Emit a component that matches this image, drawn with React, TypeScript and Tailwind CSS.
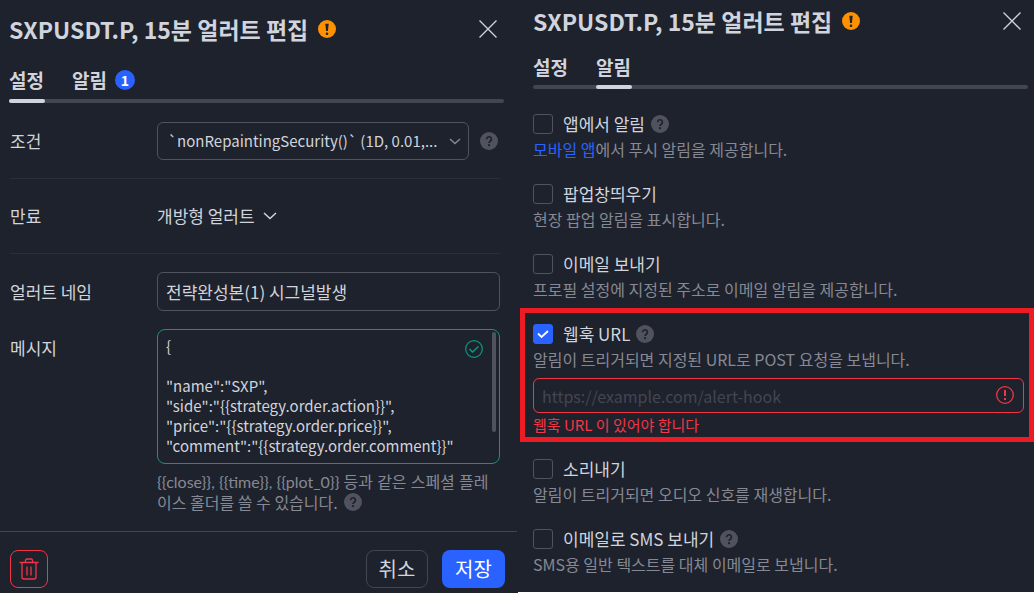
import { useState } from 'react'
import type { ReactNode } from 'react'
import clsx from 'clsx'

const MESSAGE = `{

"name":"SXP",
"side":"{{strategy.order.action}}",
"price":"{{strategy.order.price}}",
"comment":"{{strategy.order.comment}}"`

function HelpIcon() {
  return (
    <svg width="18" height="18" viewBox="0 0 18 18" className="shrink-0" aria-hidden="true">
      <circle cx="9" cy="9" r="9" fill="#50535e" />
      <path d="M6.6 7.2a2.4 2.4 0 1 1 3.7 2c-.9.6-1.3 1-1.3 1.8" fill="none" stroke="#1e222d" strokeWidth="1.7" />
      <circle cx="9" cy="13.2" r="1.1" fill="#1e222d" />
    </svg>
  )
}

function WarningIcon() {
  return (
    <svg width="18" height="18" viewBox="0 0 18 18" className="shrink-0" aria-hidden="true">
      <circle cx="9" cy="9" r="9" fill="#ff9100" />
      <path d="M7.3 3.8h3.4L9.9 11H8.1z" fill="#1e222d" />
      <circle cx="9" cy="13.7" r="1.3" fill="#1e222d" />
    </svg>
  )
}

function CloseIcon() {
  return (
    <svg width="18" height="18" viewBox="0 0 18 18" fill="none" stroke="#d1d4dc" strokeWidth="1.3" aria-hidden="true">
      <path d="M.5.5l17 17M17.5.5l-17 17" />
    </svg>
  )
}

function TrashIcon() {
  return (
    <svg width="20" height="22" viewBox="0 0 20 22" fill="none" stroke="#f23645" strokeWidth="1.3" aria-hidden="true">
      <path d="M.5 4.5h19M6.5 4V2.5A1.5 1.5 0 0 1 8 1h4a1.5 1.5 0 0 1 1.5 1.5V4M3 4.5V19a2 2 0 0 0 2 2h10a2 2 0 0 0 2-2V4.5M8 8.5v9M12 8.5v9" />
    </svg>
  )
}

interface HeaderProps {
  active: number
  badge?: number
  titleClass: string
  tabsClass: string
}

function Header({ active, badge, titleClass, tabsClass }: HeaderProps) {
  const [tab, setTab] = useState(active)

  return (
    <header>
      <div className={clsx('flex items-center justify-between pr-[7px]', titleClass)}>
        <h1 className="flex items-center gap-2.5 text-[23px] leading-9 font-bold">
          SXPUSDT.P, 15분 얼러트 편집
          <WarningIcon />
        </h1>
        <button type="button" aria-label="닫기">
          <CloseIcon />
        </button>
      </div>
      <nav className={clsx('flex gap-7', tabsClass)}>
        {['설정', '알림'].map((name, i) => (
          <button
            key={name}
            type="button"
            onClick={() => setTab(i)}
            className="relative flex items-center gap-2 text-[19px] font-bold"
          >
            {name}
            {i === 1 && badge && (
              <span className="flex size-5 items-center justify-center rounded-full bg-[#2962ff] text-sm text-white">
                {badge}
              </span>
            )}
            {tab === i && <span className="absolute top-full left-0 h-1 w-9 rounded-sm bg-[#d1d4dc]" />}
          </button>
        ))}
      </nav>
      <div className="h-1 rounded-sm bg-[#434651]" />
    </header>
  )
}

interface OptionProps {
  id: string
  label: string
  help?: boolean
  checked?: boolean
  children: ReactNode
}

function Option({ id, label, help, checked, children }: OptionProps) {
  return (
    <div>
      <div className="flex h-6 items-center">
        <span className="relative mr-2.5 flex">
          <input
            id={id}
            type="checkbox"
            defaultChecked={checked}
            className="peer size-5 appearance-none rounded-[3px] border border-[#50535e] checked:border-[#2962ff] checked:bg-[#2962ff]"
          />
          <svg
            viewBox="0 0 20 20"
            className="pointer-events-none absolute inset-0 hidden size-5 peer-checked:block"
            fill="none"
            stroke="#fff"
            strokeWidth="1.8"
            aria-hidden="true"
          >
            <path d="M5 9.5l3.5 3.5L15 7" />
          </svg>
        </span>
        <label htmlFor={id} className="mr-1.5 text-[17px] leading-6">{label}</label>
        {help && <HelpIcon />}
      </div>
      <p className="py-px text-base leading-6 text-[#868993]">{children}</p>
    </div>
  )
}

function SettingsPanel() {
  return (
    <section className="flex flex-col">
      <div className="pr-[13px] pl-[9px]">
        <Header active={0} badge={1} titleClass="pt-[11px]" tabsClass="mt-[14px] h-[38px]" />
      </div>

      <div className="pr-[17px] pl-2.5">
        <div className="flex items-center border-b border-[#2a2e39] pt-[19px] pb-[18px]">
          <label htmlFor="condition" className="w-[147px] shrink-0 text-[17px]">조건</label>
          <div className="relative min-w-0 grow">
            <select
              id="condition"
              className="h-[38px] w-full appearance-none rounded-md border border-[#50535e] bg-transparent pr-6 pl-2.5 text-[15px]"
            >
              <option>`nonRepaintingSecurity()` (1D, 0.01,...</option>
            </select>
            <svg
              viewBox="0 0 12 7"
              className="pointer-events-none absolute top-4 right-2 w-3"
              fill="none"
              stroke="#868993"
              strokeWidth="1.5"
              aria-hidden="true"
            >
              <path d="M1 1l5 4.5L11 1" />
            </svg>
          </div>
          <span className="ml-[11px] pr-0.5">
            <HelpIcon />
          </span>
        </div>

        <div className="flex h-[75px] items-center border-b border-[#2a2e39]">
          <span className="w-[147px] shrink-0 text-[17px]">만료</span>
          <button type="button" className="flex items-center gap-2 text-[17px]">
            개방형 얼러트
            <svg width="14" height="8" viewBox="0 0 14 8" fill="none" stroke="#d1d4dc" strokeWidth="1.5" aria-hidden="true">
              <path d="M1 1l6 5.5L13 1" />
            </svg>
          </button>
        </div>

        <div className="mt-[18px] flex items-center">
          <label htmlFor="name" className="w-[147px] shrink-0 text-[17px]">얼러트 네임</label>
          <input
            id="name"
            defaultValue="전략완성본(1) 시그널발생"
            className="h-[39px] min-w-0 grow rounded-md border border-[#50535e] bg-transparent px-2 text-[17px]"
          />
        </div>

        <div className="mt-[18px] flex">
          <label htmlFor="message" className="w-[147px] shrink-0 pt-1.5 text-[17px]">메시지</label>
          <div className="min-w-0 grow">
            <div className="relative">
              <textarea
                id="message"
                defaultValue={MESSAGE}
                className="block h-[135px] w-full resize-none overflow-hidden rounded-lg border border-[#089981] bg-transparent px-2 py-1.5 text-[15px] leading-5"
              />
              <svg
                viewBox="0 0 18 18"
                className="absolute top-[11px] right-[17px] size-[18px]"
                fill="none"
                stroke="#089981"
                aria-hidden="true"
              >
                <circle cx="9" cy="9" r="8.3" strokeWidth="1.2" />
                <path d="M4.5 9l3 3 6-5.5" strokeWidth="1.5" />
              </svg>
              <span className="absolute top-[3px] right-1 h-[100px] w-1 rounded-sm bg-[#50535e]" />
            </div>
            <p className="mt-2 font-['Lato','Noto_Sans_CJK_KR',sans-serif] text-base leading-5 break-all text-[#868993]">
              {'{{close}}, {{time}}, {{plot_0}} 등과 같은 스페셜 플레'}
              <span className="flex items-center gap-1.5 font-['Noto_Sans_CJK_KR',sans-serif]">
                이스 홀더를 쓸 수 있습니다.
                <HelpIcon />
              </span>
            </p>
          </div>
        </div>
      </div>

      <footer className="mt-[19px] flex items-center gap-3.5 border-t border-[#434651] pt-[18px] pr-3 pb-[5px] pl-2.5 text-xl">
        <button
          type="button"
          aria-label="삭제"
          className="mr-auto flex size-[38px] items-center justify-center rounded-lg border border-[#f23645]"
        >
          <TrashIcon />
        </button>
        <button type="button" className="h-[38px] w-[62px] rounded-lg border border-[#434651]">취소</button>
        <button type="button" className="h-[38px] w-[63px] rounded-lg bg-[#2962ff] text-white">저장</button>
      </footer>
    </section>
  )
}

function NotificationsPanel() {
  return (
    <section>
      <div className="pr-1.5 pl-4">
        <Header active={1} titleClass="pt-[3px]" tabsClass="mt-[11px] h-[35px]" />
      </div>

      <div className="mt-[23px] space-y-5 pl-4">
        <Option id="app" label="앱에서 알림" help>
          <a href="#mobile" className="text-[#2962ff]">모바일 앱</a>에서 푸시 알림을 제공합니다.
        </Option>
        <Option id="popup" label="팝업창띄우기">현장 팝업 알림을 표시합니다.</Option>
        <Option id="email" label="이메일 보내기">프로필 설정에 지정된 주소로 이메일 알림을 제공합니다.</Option>
      </div>

      <div className="mt-1.5 ml-[3px] border-5 border-[#ed1c24] pt-[9px] pr-[5px] pl-2">
        <Option id="webhook" label="웹훅 URL" help checked>
          알림이 트리거되면 지정된 URL로 POST 요청을 보냅니다.
        </Option>
        <div className="relative mt-1.5">
          <input
            type="url"
            aria-label="웹훅 URL"
            placeholder="https://example.com/alert-hook"
            className="block h-[35px] w-full rounded-md border border-[#f23645] bg-transparent pr-9 pl-2 text-base placeholder:text-[#434651]"
          />
          <svg
            viewBox="0 0 18 18"
            className="absolute top-2 right-2.5 size-[18px]"
            fill="none"
            stroke="#f23645"
            aria-hidden="true"
          >
            <circle cx="9" cy="9" r="8.3" strokeWidth="1.3" />
            <path d="M9 4v6M9 12v2" strokeWidth="2" />
          </svg>
        </div>
        <p className="text-[15px] leading-6 text-[#f23645]">웹훅 URL 이 있어야 합니다</p>
      </div>

      <div className="mt-[15px] space-y-5 pb-[15px] pl-4">
        <Option id="sound" label="소리내기">알림이 트리거되면 오디오 신호를 재생합니다.</Option>
        <Option id="sms" label="이메일로 SMS 보내기" help>
          SMS용 일반 텍스트를 대체 이메일로 보냅니다.
        </Option>
      </div>
      <div className="ml-px h-px bg-white" />
    </section>
  )
}

export default function App() {
  return (
    <main className="grid min-h-screen grid-cols-2 bg-[#1e222d] font-['Noto_Sans_CJK_KR',sans-serif] text-[#d1d4dc]">
      <SettingsPanel />
      <NotificationsPanel />
    </main>
  )
}
